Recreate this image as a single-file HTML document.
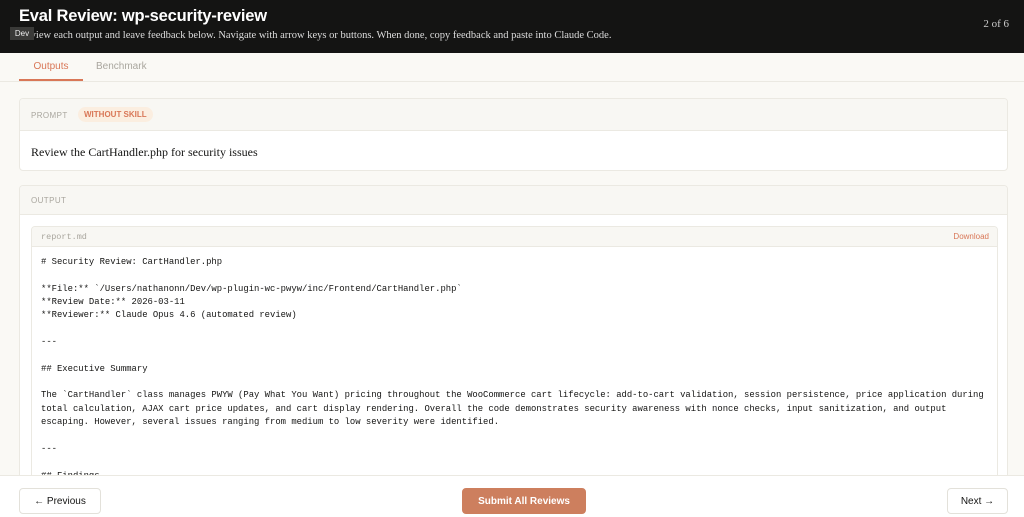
<!DOCTYPE html>
<html><head><meta charset="utf-8"><style>
*{box-sizing:border-box;margin:0;padding:0}
html,body{width:1024px;height:517px;overflow:hidden;background:#faf9f5;font-family:"Liberation Sans",sans-serif;position:relative}
.hdr{position:absolute;left:0;top:0;width:1024px;height:53px;background:#141413;color:#fff}
.hdr h1{position:absolute;left:19px;top:7px;font-size:16.5px;font-weight:bold;letter-spacing:-0.2px}
.hdr .sub{position:absolute;left:19px;top:30px;font-family:"Liberation Serif",serif;font-size:10.5px;color:#ddd}
.hdr .cnt{position:absolute;right:15px;top:18px;font-family:"Liberation Serif",serif;font-size:11px;color:#ccc}
.dev{position:absolute;left:10px;top:27px;width:24px;height:13px;background:#3a3a38;color:#eee;font-size:8px;line-height:13px;text-align:center}
.tabs{position:absolute;left:0;top:53px;width:1024px;height:29px;border-bottom:1px solid #ebe9e2}
.tab{position:absolute;top:8px;font-size:10px}
.t1{left:19px;width:64px;text-align:center;color:#d97757;height:20px;border-bottom:2px solid #d97757}
.t2{left:96px;color:#a9a69e}
.card{position:absolute;left:19px;width:989px;border:1px solid #ebe9e2;border-radius:4px;background:#fff;overflow:hidden}
.ch{background:#f8f7f3;border-bottom:1px solid #ebe9e2;height:32px;position:relative}
.lab{position:absolute;left:11px;font-size:8px;color:#a9a69e;letter-spacing:.4px}
.badge{position:absolute;left:58px;top:8px;height:15px;padding:0 6px;background:#fbeee0;color:#d97757;font-size:8px;font-weight:bold;line-height:15px;border-radius:8px}
.ptext{position:absolute;left:11px;top:46px;font-family:"Liberation Serif",serif;font-size:12px;color:#141413}
.file{position:absolute;left:11px;top:40px;width:967px;height:300px;border:1px solid #ebe9e2;border-radius:4px;overflow:hidden}
.fh{height:20px;background:#f8f7f3;border-bottom:1px solid #ebe9e2;position:relative}
.fh .n{position:absolute;left:9px;top:5px;font-family:"Liberation Mono",monospace;font-size:8.5px;color:#a9a69e}
.fh .d{position:absolute;right:8px;top:5px;font-size:8px;color:#d97757}
pre{padding:9px 9px;font-family:"Liberation Mono",monospace;font-size:8.9px;line-height:13.35px;color:#141413;white-space:pre-wrap}
.foot{position:absolute;left:0;top:475px;width:1024px;height:42px;background:#fff;border-top:1px solid #ebe9e2}
.btn{position:absolute;top:12px;height:26px;border:1px solid #e3e1da;border-radius:4px;font-size:10px;line-height:26px;text-align:center;color:#141413;background:#fff}
.sub2{background:#cd7f5e;color:#fff;border-color:#cd7f5e;font-weight:bold}
</style></head><body>
<div class="hdr"><h1>Eval Review: wp-security-review</h1><div class="sub">Review each output and leave feedback below. Navigate with arrow keys or buttons. When done, copy feedback and paste into Claude Code.</div><div class="cnt">2 of 6</div></div>
<div class="dev">Dev</div>
<div class="tabs"><div class="tab t1">Outputs</div><div class="tab t2">Benchmark</div></div>
<div class="card" style="top:98px;height:73px"><div class="ch"><span class="lab" style="top:12px">PROMPT</span><span class="badge">WITHOUT SKILL</span></div><div class="ptext">Review the CartHandler.php for security issues</div></div>
<div class="card" style="top:185px;height:340px"><div class="ch" style="height:29px"><span class="lab" style="top:10px">OUTPUT</span></div>
<div class="file"><div class="fh"><span class="n">report.md</span><span class="d">Download</span></div>
<pre># Security Review: CartHandler.php

**File:** `/Users/nathanonn/Dev/wp-plugin-wc-pwyw/inc/Frontend/CartHandler.php`
**Review Date:** 2026-03-11
**Reviewer:** Claude Opus 4.6 (automated review)

---

## Executive Summary

The `CartHandler` class manages PWYW (Pay What You Want) pricing throughout the WooCommerce cart lifecycle: add-to-cart validation, session persistence, price application during total calculation, AJAX cart price updates, and cart display rendering. Overall the code demonstrates security awareness with nonce checks, input sanitization, and output escaping. However, several issues ranging from medium to low severity were identified.

---

## Findings</pre></div></div>
<div class="foot"><div class="btn" style="left:19px;width:82px">← Previous</div><div class="btn sub2" style="left:462px;width:124px">Submit All Reviews</div><div class="btn" style="left:947px;width:61px">Next →</div></div>
</body></html>
